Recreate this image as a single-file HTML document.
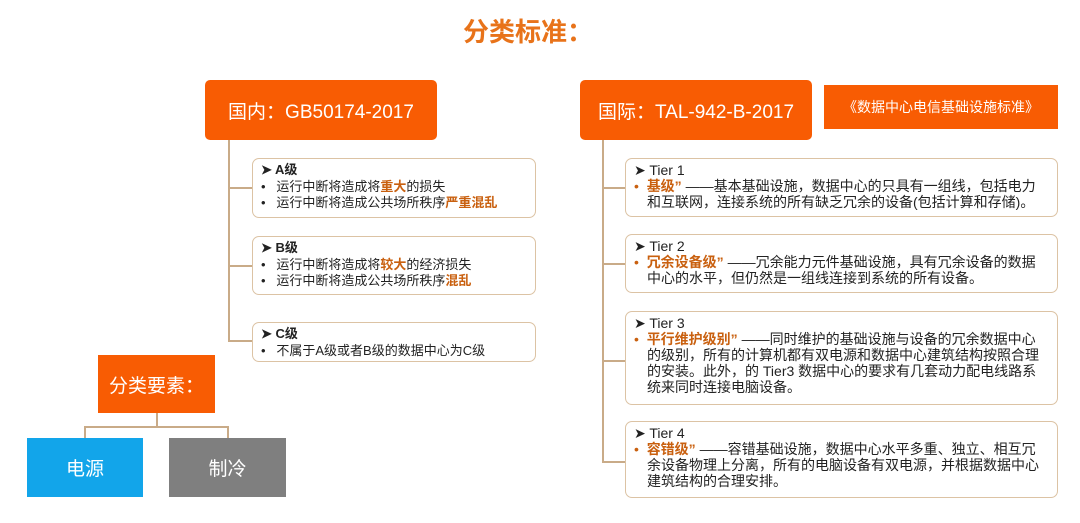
<!DOCTYPE html>
<html><head><meta charset="utf-8"><style>
*{margin:0;padding:0;box-sizing:border-box}
body{width:1080px;height:523px;background:#fff;position:relative;overflow:hidden;font-family:"Liberation Sans","Noto Sans CJK SC",sans-serif;color:#222}
.a{position:absolute}
.hd{background:#f85c03;color:#fff;border-radius:5px;font-size:19px;display:flex;align-items:center;justify-content:center}
.bx{position:absolute;border:1.5px solid #dcc3a4;border-radius:7px;padding:3px 0 0 8px;font-size:13px;line-height:16.5px;background:#fff;white-space:nowrap}
.o{color:#c9600f;font-weight:bold}
.b{font-weight:bold}
.ln{position:absolute;background:#c9ab88}
.t{font-size:14px;line-height:16px}
.t .c{padding-left:13px}
</style></head><body>
<div class="a" style="left:0;width:1056px;top:12px;text-align:center;font-size:26px;font-weight:bold;color:#e8731a">分类标准：</div>

<div class="a hd" style="left:205px;top:80px;width:232px;height:60px">国内：GB50174-2017</div>
<div class="ln" style="left:228px;top:140px;width:1.5px;height:201px"></div>
<div class="ln" style="left:228px;top:187px;width:24px;height:1.5px"></div>
<div class="ln" style="left:228px;top:265px;width:24px;height:1.5px"></div>
<div class="ln" style="left:228px;top:340px;width:24px;height:1.5px"></div>
<div class="bx" style="left:252px;top:158px;width:284px;height:60px"><div class="b">➤ A级</div><div>•&nbsp;&nbsp; 运行中断将造成将<span class="o">重大</span>的损失</div><div>•&nbsp;&nbsp; 运行中断将造成公共场所秩序<span class="o">严重混乱</span></div></div>
<div class="bx" style="left:252px;top:236px;width:284px;height:59px"><div class="b">➤ B级</div><div>•&nbsp;&nbsp; 运行中断将造成将<span class="o">较大</span>的经济损失</div><div>•&nbsp;&nbsp; 运行中断将造成公共场所秩序<span class="o">混乱</span></div></div>
<div class="bx" style="left:252px;top:322px;width:284px;height:40px"><div class="b">➤ C级</div><div>•&nbsp;&nbsp; 不属于A级或者B级的数据中心为C级</div></div>

<div class="a hd" style="left:580px;top:80px;width:232px;height:60px">国际：TAL-942-B-2017</div>
<div class="a hd" style="left:824px;top:85px;width:234px;height:44px;border-radius:0;font-size:14px">《数据中心电信基础设施标准》</div>
<div class="ln" style="left:602px;top:140px;width:1.5px;height:322px"></div>
<div class="ln" style="left:602px;top:187px;width:23px;height:1.5px"></div>
<div class="ln" style="left:602px;top:263px;width:23px;height:1.5px"></div>
<div class="ln" style="left:602px;top:360px;width:23px;height:1.5px"></div>
<div class="ln" style="left:602px;top:461px;width:23px;height:1.5px"></div>
<div class="bx t" style="left:625px;top:158px;width:433px;height:59px"><div>➤ Tier 1</div><div><span style="color:#c9600f">•</span>&nbsp; <span class="o">基级”</span> ——基本基础设施，数据中心的只具有一组线，包括电力</div><div class="c">和互联网，连接系统的所有缺乏冗余的设备(包括计算和存储)。</div></div>
<div class="bx t" style="left:625px;top:234px;width:433px;height:59px"><div>➤ Tier 2</div><div><span style="color:#c9600f">•</span>&nbsp; <span class="o">冗余设备级”</span> ——冗余能力元件基础设施，具有冗余设备的数据</div><div class="c">中心的水平，但仍然是一组线连接到系统的所有设备。</div></div>
<div class="bx t" style="left:625px;top:311px;width:433px;height:94px"><div>➤ Tier 3</div><div><span style="color:#c9600f">•</span>&nbsp; <span class="o">平行维护级别”</span> ——同时维护的基础设施与设备的冗余数据中心</div><div class="c">的级别，所有的计算机都有双电源和数据中心建筑结构按照合理</div><div class="c">的安装。此外，的 Tier3 数据中心的要求有几套动力配电线路系</div><div class="c">统来同时连接电脑设备。</div></div>
<div class="bx t" style="left:625px;top:421px;width:433px;height:77px"><div>➤ Tier 4</div><div><span style="color:#c9600f">•</span>&nbsp; <span class="o">容错级”</span> ——容错基础设施，数据中心水平多重、独立、相互冗</div><div class="c">余设备物理上分离，所有的电脑设备有双电源，并根据数据中心</div><div class="c">建筑结构的合理安排。</div></div>

<div class="a hd" style="left:98px;top:355px;width:117px;height:58px;border-radius:0">分类要素：</div>
<div class="ln" style="left:156px;top:413px;width:1.5px;height:13px"></div>
<div class="ln" style="left:84px;top:426px;width:145px;height:1.5px"></div>
<div class="ln" style="left:84px;top:426px;width:1.5px;height:12px"></div>
<div class="ln" style="left:227px;top:426px;width:1.5px;height:12px"></div>
<div class="a hd" style="left:27px;top:438px;width:116px;height:59px;border-radius:0;background:#12a5ea">电源</div>
<div class="a hd" style="left:169px;top:438px;width:117px;height:59px;border-radius:0;background:#7f7f7f">制冷</div>
</body></html>
